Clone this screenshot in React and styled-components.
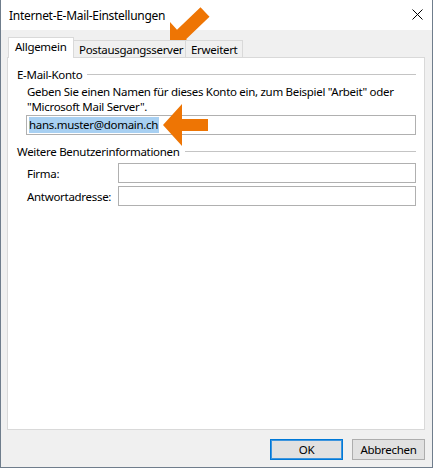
import styled, { createGlobalStyle } from "styled-components";

const GlobalStyle = createGlobalStyle`
  * {
    box-sizing: border-box;
  }

  body {
    margin: 0;
    background: #ffffff;
    font-family: "Noto Sans", "Open Sans", sans-serif;
    font-size: 11.5px;
    letter-spacing: -0.3px;
    color: #000000;
  }
`;

const Window = styled.div`
  position: relative;
  width: 433px;
  height: 468px;
  display: flex;
  flex-direction: column;
  border: 1px solid #6f7d8c;
  border-top: none;
  background: #f0f0f0;
`;

const TitleBar = styled.div`
  height: 30px;
  display: flex;
  align-items: center;
  justify-content: space-between;
  padding: 0 9px 0 8px;
  background: #ffffff;
  font-size: 12px;
`;

const CloseIcon = styled.svg`
  width: 11px;
  height: 11px;
  margin-bottom: 1px;
`;

const Body = styled.div`
  flex: 1;
  display: flex;
  flex-direction: column;
  padding: 7px 7px 0 6px;
`;

const TabRow = styled.div`
  position: relative;
  z-index: 1;
  display: flex;
  align-items: flex-end;
  height: 21px;
  margin-bottom: -1px;
  padding-left: 1px;
`;

const Tab = styled.div`
  width: ${(p) => p.$w}px;
  height: ${(p) => (p.$active ? 21 : 17)}px;
  margin-bottom: ${(p) => (p.$active ? 0 : 1)}px;
  margin-left: ${(p) => (p.$first ? 0 : -1)}px;
  display: flex;
  align-items: center;
  padding-left: ${(p) => (p.$active ? 6 : 5)}px;
  padding-bottom: ${(p) => (p.$active ? 3 : 0)}px;
  background: ${(p) => (p.$active ? "#ffffff" : "#f0f0f0")};
  border: 1px solid #d9d9d9;
  border-bottom: none;
  white-space: nowrap;
`;

const Panel = styled.div`
  height: 373px;
  display: flex;
  flex-direction: column;
  padding: 8px 8px 0 9px;
  background: #ffffff;
  border: 1px solid #d9d9d9;
`;

const GroupHeader = styled.div`
  display: flex;
  align-items: center;
  gap: 5px;
  height: 16px;
  margin-top: ${(p) => p.$top || 0}px;

  &::after {
    content: "";
    flex: 1;
    height: 1px;
    background: #c4c4c4;
  }
`;

const Hint = styled.p`
  margin: 2px 0 0 10px;
  line-height: 15px;
`;

const TextInput = styled.div`
  height: 20px;
  display: flex;
  align-items: center;
  padding-left: 2px;
  margin-left: ${(p) => p.$indent || 0}px;
  border: 1px solid #b0b0b0;
  background: #ffffff;
  ${(p) => (p.$grow ? "flex: 1;" : "")}
`;

const Selected = styled.span`
  background: #a8d0f2;
  line-height: 16px;
  padding-right: 1px;
`;

const FieldRow = styled.div`
  display: flex;
  align-items: center;
  margin-top: ${(p) => p.$top}px;
`;

const Label = styled.span`
  width: 101px;
  padding-left: 10px;
`;

const Footer = styled.div`
  display: flex;
  justify-content: flex-end;
  gap: 9px;
  padding-top: 9px;
`;

const Button = styled.div`
  width: 73px;
  height: 21px;
  display: flex;
  align-items: center;
  justify-content: center;
  background: #e1e1e1;
  border: 1px solid ${(p) => (p.$default ? "#0078d7" : "#adadad")};
  box-shadow: ${(p) => (p.$default ? "inset 0 0 0 1px #3e95dd" : "none")};
`;

const Overlay = styled.svg`
  position: absolute;
  top: 0;
  left: -1px;
  width: 433px;
  height: 468px;
  pointer-events: none;
`;

const ARROW = "#ee7504";

function App() {
  return (
    <>
      <GlobalStyle />
      <Window>
        <TitleBar>
          <span>Internet-E-Mail-Einstellungen</span>
          <CloseIcon viewBox="0 0 11 11">
            <path d="M0.5 0.5 L10.5 10.5 M10.5 0.5 L0.5 10.5" stroke="#000" strokeWidth="1" />
          </CloseIcon>
        </TitleBar>

        <Body>
          <TabRow>
            <Tab $active $first $w={66}>Allgemein</Tab>
            <Tab $w={113}>Postausgangsserver</Tab>
            <Tab $w={58}>Erweitert</Tab>
          </TabRow>

          <Panel>
            <GroupHeader>E-Mail-Konto</GroupHeader>
            <Hint>
              Geben Sie einen Namen für dieses Konto ein, zum Beispiel "Arbeit" oder
              <br />
              "Microsoft Mail Server".
            </Hint>
            <FieldRow $top={1}>
              <TextInput $indent={9} $grow>
                <Selected>hans.muster@domain.ch</Selected>
              </TextInput>
            </FieldRow>

            <GroupHeader $top={8}>Weitere Benutzerinformationen</GroupHeader>
            <FieldRow $top={4}>
              <Label>Firma:</Label>
              <TextInput $grow />
            </FieldRow>
            <FieldRow $top={3}>
              <Label>Antwortadresse:</Label>
              <TextInput $grow />
            </FieldRow>
          </Panel>

          <Footer>
            <Button $default>OK</Button>
            <Button>Abbrechen</Button>
          </Footer>
        </Body>

        <Overlay viewBox="0 0 433 468">
          <polygon
            fill={ARROW}
            points="170,44 195,45 186,39.2 209.5,16.7 200.5,7.3 177,29.8 170,22"
          />
          <polygon
            fill={ARROW}
            points="163,125 182,104 182,119 208,119 208,131 182,131 182,146"
          />
        </Overlay>
      </Window>
    </>
  );
}

export default App;
